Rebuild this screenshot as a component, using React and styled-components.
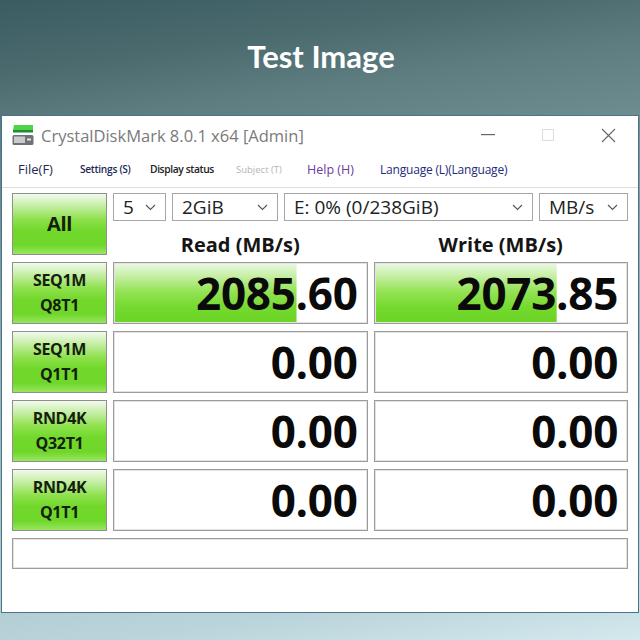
import React from 'react'
import styled, { createGlobalStyle } from 'styled-components'

const GlobalStyle = createGlobalStyle`
	*, *::before, *::after {
		box-sizing: border-box;
	}
	html, body {
		margin: 0;
		padding: 0;
	}
	body {
		font-family: 'Open Sans', 'Noto Sans', sans-serif;
	}
`

const Page = styled.div`
	width: 640px;
	height: 640px;
	overflow: hidden;
	display: flex;
	flex-direction: column;
	background: linear-gradient(172deg, #3b5c61 0%, #4a6a6e 10%, #5d7d80 18%, #8fb0b6 50%, #b9d4da 90%, #d4e9ee 100%);
`

const Heading = styled.h1`
	height: 115px;
	margin: 0;
	padding: 0 0 4px 2px;
	display: flex;
	align-items: center;
	justify-content: center;
	font-family: Lato, sans-serif;
	font-weight: 700;
	font-size: 31px;
	color: #ffffff;
`

const Window = styled.div`
	margin: 0 1px;
	border: 1px solid #4d7388;
	background: #ffffff;
`

const TitleBar = styled.div`
	height: 35px;
	display: flex;
	align-items: center;
	padding: 3px 0 0 10px;
`

const TitleText = styled.span`
	margin-left: 7px;
	font-size: 16.5px;
	color: #7a7a7a;
	flex: 1;
`

const WinButton = styled.div`
	width: 60px;
	height: 30px;
	display: flex;
	align-items: center;
	justify-content: center;
`

const MenuBar = styled.div`
	height: 37px;
	display: flex;
	align-items: center;
	padding-left: 16px;
	border-bottom: 1px solid #dddddd;
`

const MenuItem = styled.span`
	width: ${props => props.$w}px;
	flex: none;
	font-size: ${props => props.$size}px;
	font-weight: ${props => props.$weight || 400};
	color: ${props => props.$color};
	letter-spacing: ${props => props.$ls || 0}px;
	white-space: nowrap;
`

const Body = styled.div`
	display: grid;
	grid-template-columns: 95px 1fr 1fr;
	grid-auto-rows: 62px;
	gap: 7px 6px;
	padding: 5px 10px 12px;
`

const GreenButton = styled.div`
	border: 1px solid #8f8f8f;
	display: flex;
	flex-direction: column;
	align-items: center;
	justify-content: center;
	background: linear-gradient(to bottom, #f1faec 0%, #c9efab 18%, #8fe14e 42%, #72d92c 60%, #6fd72a 85%, #98e660 100%);
	color: #14200c;
	font-weight: 700;
	font-size: ${props => (props.$big ? 20 : 16)}px;
	line-height: ${props => (props.$big ? 30 : 25)}px;
	letter-spacing: -0.3px;
`

const TopPanel = styled.div`
	grid-column: 2 / 4;
	display: flex;
	flex-direction: column;
`

const ComboRow = styled.div`
	height: 30px;
	display: flex;
	gap: 6px;
`

const Combo = styled.div`
	width: ${props => (props.$w ? props.$w + 'px' : 'auto')};
	flex: ${props => (props.$w ? 'none' : 1)};
	min-width: 0;
	border: 1px solid #a7a7a7;
	display: flex;
	align-items: center;
	justify-content: space-between;
	padding: 0 9px 0 9px;
	font-size: 19px;
	color: #222222;
	white-space: nowrap;
`

const HeaderRow = styled.div`
	flex: 1;
	display: grid;
	grid-template-columns: 1fr 1fr;
	gap: 6px;
	align-items: center;
`

const Header = styled.div`
	text-align: center;
	font-weight: 700;
	font-size: 20px;
	color: #151515;
	padding-top: 12px;
	line-height: 24px;
`

const Cell = styled.div`
	border: 1px solid #9c9c9c;
	box-shadow: inset 0 0 0 1px #e2e2e2;
	background-image: linear-gradient(to bottom, #eef8e6 0%, #c5efa3 22%, #93e253 48%, #74d92e 75%, #6ad424 100%);
	background-repeat: no-repeat;
	background-size: 0% 100%;
	text-align: right;
	padding-right: 9px;
	font-weight: 700;
	font-size: 44px;
	line-height: 60px;
	color: #0a0a0a;
	letter-spacing: -0.3px;
`

const Comment = styled.div`
	grid-column: 1 / -1;
	height: 31px;
	align-self: start;
	border: 1px solid #9c9c9c;
	box-shadow: inset 0 0 0 1px #e2e2e2;
`

const Chevron = () => (
	<svg width='11' height='7' viewBox='0 0 11 7'>
		<path d='M1 1 L5.5 5.5 L10 1' fill='none' stroke='#555' strokeWidth='1.1' />
	</svg>
)

const AppIcon = () => (
	<svg width='22' height='22' viewBox='0 0 22 22'>
		<path d='M2 1 H21 V6 H1 Z' fill='#4fd34a' />
		<rect x='1' y='6' width='20' height='2.5' fill='#1f8c31' />
		<rect x='0.5' y='11' width='21' height='10' rx='1.5' fill='#6f7276' />
		<rect x='2' y='12.5' width='11' height='6.5' fill='#c9cbcd' />
		<rect x='15' y='14.5' width='4' height='2' fill='#e4e4e4' />
	</svg>
)

const menu = [
	{ label: 'File(F)', w: 62, size: 13, color: '#1d2a55' },
	{ label: 'Settings (S)', w: 70, size: 10.2, color: '#1d2a55', weight: 600, ls: -0.3 },
	{ label: 'Display status', w: 86, size: 10.3, color: '#222222', weight: 600, ls: -0.4 },
	{ label: 'Subject (T)', w: 71, size: 9.5, color: '#b5b5b5' },
	{ label: 'Help (H)', w: 73, size: 12.5, color: '#6a3c9c', weight: 500 },
	{ label: 'Language (L)(Language)', w: 140, size: 12, color: '#1f2a7a', weight: 500, ls: -0.2 },
]

const tests = [
	{ top: 'SEQ1M', bottom: 'Q8T1', read: 2085.6, write: 2073.85 },
	{ top: 'SEQ1M', bottom: 'Q1T1', read: 0, write: 0 },
	{ top: 'RND4K', bottom: 'Q32T1', read: 0, write: 0 },
	{ top: 'RND4K', bottom: 'Q1T1', read: 0, write: 0 },
]

// log scale, like the real app
const barPct = v => (v > 0 ? Math.min(100, (Math.log10(v) / 4.6) * 100) : 0)

const Value = ({ value }) => (
	<Cell style={{ backgroundSize: `${barPct(value)}% 100%` }}>{value.toFixed(2)}</Cell>
)

export default function App() {
	return (
		<Page>
			<GlobalStyle />
			<Heading>Test Image</Heading>
			<Window>
				<TitleBar>
					<AppIcon />
					<TitleText>CrystalDiskMark 8.0.1 x64 [Admin]</TitleText>
					<WinButton>
						<svg width='14' height='2' viewBox='0 0 14 2'>
							<rect width='14' height='1.2' fill='#666' />
						</svg>
					</WinButton>
					<WinButton>
						<svg width='12' height='12' viewBox='0 0 12 12'>
							<rect x='0.5' y='0.5' width='11' height='11' fill='none' stroke='#dcdcdc' />
						</svg>
					</WinButton>
					<WinButton>
						<svg width='15' height='15' viewBox='0 0 15 15'>
							<path d='M1 1 L14 14 M14 1 L1 14' stroke='#666' strokeWidth='1.1' />
						</svg>
					</WinButton>
				</TitleBar>
				<MenuBar>
					{menu.map(m => (
						<MenuItem key={m.label} $w={m.w} $size={m.size} $color={m.color} $weight={m.weight} $ls={m.ls}>
							{m.label}
						</MenuItem>
					))}
				</MenuBar>
				<Body>
					<GreenButton $big>All</GreenButton>
					<TopPanel>
						<ComboRow>
							<Combo $w={53}>5<Chevron /></Combo>
							<Combo $w={106}>2GiB<Chevron /></Combo>
							<Combo $w={249}>E: 0% (0/238GiB)<Chevron /></Combo>
							<Combo>MB/s<Chevron /></Combo>
						</ComboRow>
						<HeaderRow>
							<Header>Read (MB/s)</Header>
							<Header>Write (MB/s)</Header>
						</HeaderRow>
					</TopPanel>
					{tests.map((t, i) => (
						<React.Fragment key={i}>
							<GreenButton>
								<span>{t.top}</span>
								<span>{t.bottom}</span>
							</GreenButton>
							<Value value={t.read} />
							<Value value={t.write} />
						</React.Fragment>
					))}
					<Comment />
				</Body>
			</Window>
		</Page>
	)
}
